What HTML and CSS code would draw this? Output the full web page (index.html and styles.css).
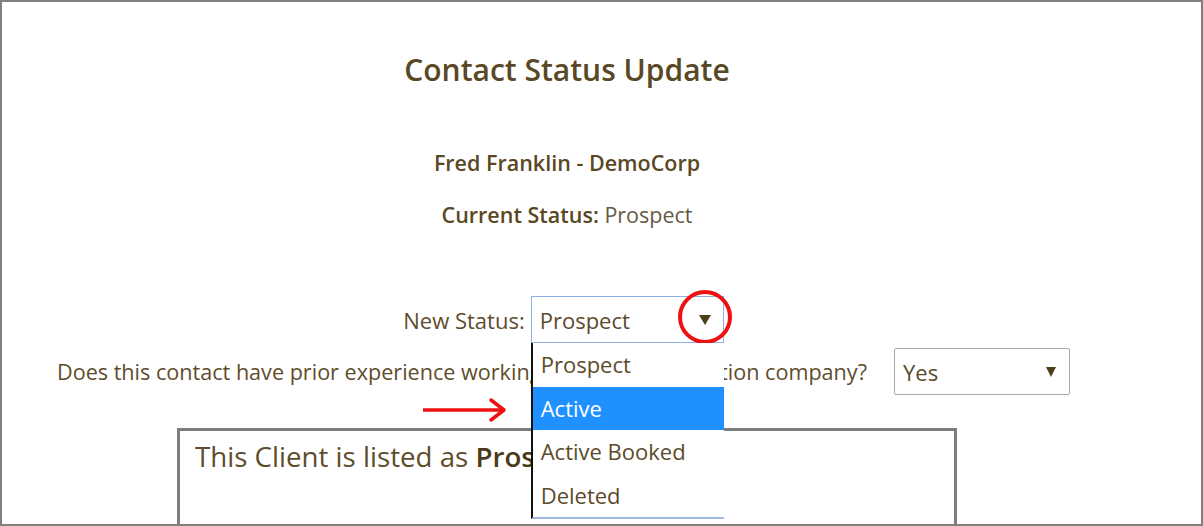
FILE: index.html
```html
<!DOCTYPE html>
<html>
<head>
<meta charset="utf-8">
<link rel="stylesheet" href="styles.css">
</head>
<body>
<div class="frame">
  <div class="content">
    <h1 class="title">Contact Status Update</h1>
    <p class="name">Fred Franklin - DemoCorp</p>
    <p class="current"><span class="strong">Current Status:</span> Prospect</p>
    <div class="row status-row">
      <span class="label">New Status:</span>
      <div class="select-wrap">
        <div class="select focused"><span>Prospect</span><svg class="caret" width="12" height="10" viewBox="0 0 12 10"><path d="M0 0 H12 L6 10 Z" fill="#4e3f1c"/></svg></div>
        <svg class="circle" width="58" height="58" viewBox="0 0 58 58"><circle cx="29" cy="29" r="25" fill="none" stroke="#ee1111" stroke-width="4"/></svg>
        <ul class="menu">
          <li>Prospect</li>
          <li class="hl">Active</li>
          <li>Active Booked</li>
          <li>Deleted</li>
        </ul>
        <svg class="arrow" width="88" height="26" viewBox="0 0 88 26"><path d="M2 13 H82" stroke="#ee1111" stroke-width="3.5" fill="none"/><path d="M70 3 L83 13 L70 23" stroke="#ee1111" stroke-width="3.5" fill="none" stroke-linecap="round" stroke-linejoin="round"/></svg>
      </div>
    </div>
    <div class="row question-row">
      <span class="label">Does this contact have prior experience working with a transportation company?</span>
      <div class="select plain"><span>Yes</span><svg class="caret" width="10" height="10" viewBox="0 0 10 10"><path d="M0 0 H10 L5 10 Z" fill="#4e3f1c"/></svg></div>
    </div>
    <div class="box">
      <p>This Client is listed as <b>Prospect</b></p>
    </div>
  </div>
</div>
</body>
</html>
```
FILE: styles.css
```css
html, body {
  margin: 0;
  padding: 0;
  background: #ffffff;
}
body {
  font-family: "Open Sans", "Noto Sans", sans-serif;
  color: #5c4b2a;
}
.frame {
  box-sizing: border-box;
  width: 1203px;
  height: 526px;
  border: 2px solid #808080;
  overflow: hidden;
}
.content {
  width: 1130px;
  display: flex;
  flex-direction: column;
  align-items: center;
}
.title {
  margin: 48px 0 0;
  font-size: 30px;
  font-weight: 600;
  line-height: 40px;
  color: #5a4825;
}
.name {
  margin: 58px 0 0;
  font-size: 21.5px;
  font-weight: 600;
  line-height: 30px;
  color: #5a4825;
}
.current {
  margin: 22px 0 0;
  font-size: 21.5px;
  line-height: 30px;
  color: #665a44;
}
.current .strong {
  font-weight: 600;
  color: #5a4825;
}
.row {
  display: flex;
  align-items: center;
  font-size: 22px;
  padding-right: 7px;
}
.status-row {
  margin-top: 66px;
  gap: 6px;
}
.question-row {
  margin-top: 5px;
  gap: 27px;
  font-size: 21.6px;
}
.label {
  color: #5e4d2c;
}
.select-wrap {
  position: relative;
}
.select {
  box-sizing: border-box;
  display: flex;
  align-items: center;
  justify-content: space-between;
  height: 47px;
  padding: 0 12px 0 8px;
  font-size: 22px;
  color: #5c4b2a;
  background: #fff;
}
.select.focused {
  width: 193px;
  border: 1px solid #8fb0e6;
}
.select.plain {
  width: 176px;
  border: 1px solid #aaaaaa;
  border-radius: 2px;
  padding-right: 13px;
}
.caret {
  display: block;
}
.circle {
  position: absolute;
  left: 145px;
  top: -8px;
}
.menu {
  position: absolute;
  left: 0;
  top: 47px;
  width: 191px;
  margin: 0;
  padding: 0;
  list-style: none;
  background: #fff;
  border-left: 2px solid #111;
  border-bottom: 2px solid #9fb8e0;
  z-index: 2;
}
.menu li {
  height: 43.5px;
  line-height: 43px;
  padding-left: 8px;
  font-size: 22px;
  color: #5c4b2a;
}
.menu li.hl {
  background: #1e90ff;
  color: #ffffff;
}
.arrow {
  position: absolute;
  left: -110px;
  top: 101px;
}
.box {
  box-sizing: border-box;
  width: 780px;
  height: 120px;
  margin-top: 33px;
  border: 3px solid #7d7d7d;
  border-bottom: none;
  padding: 6px 15px;
}
.box p {
  margin: 0;
  font-size: 27.7px;
  line-height: 38px;
  color: #5e4d2c;
}
.box b {
  font-weight: 600;
  color: #4a3a18;
}
```
